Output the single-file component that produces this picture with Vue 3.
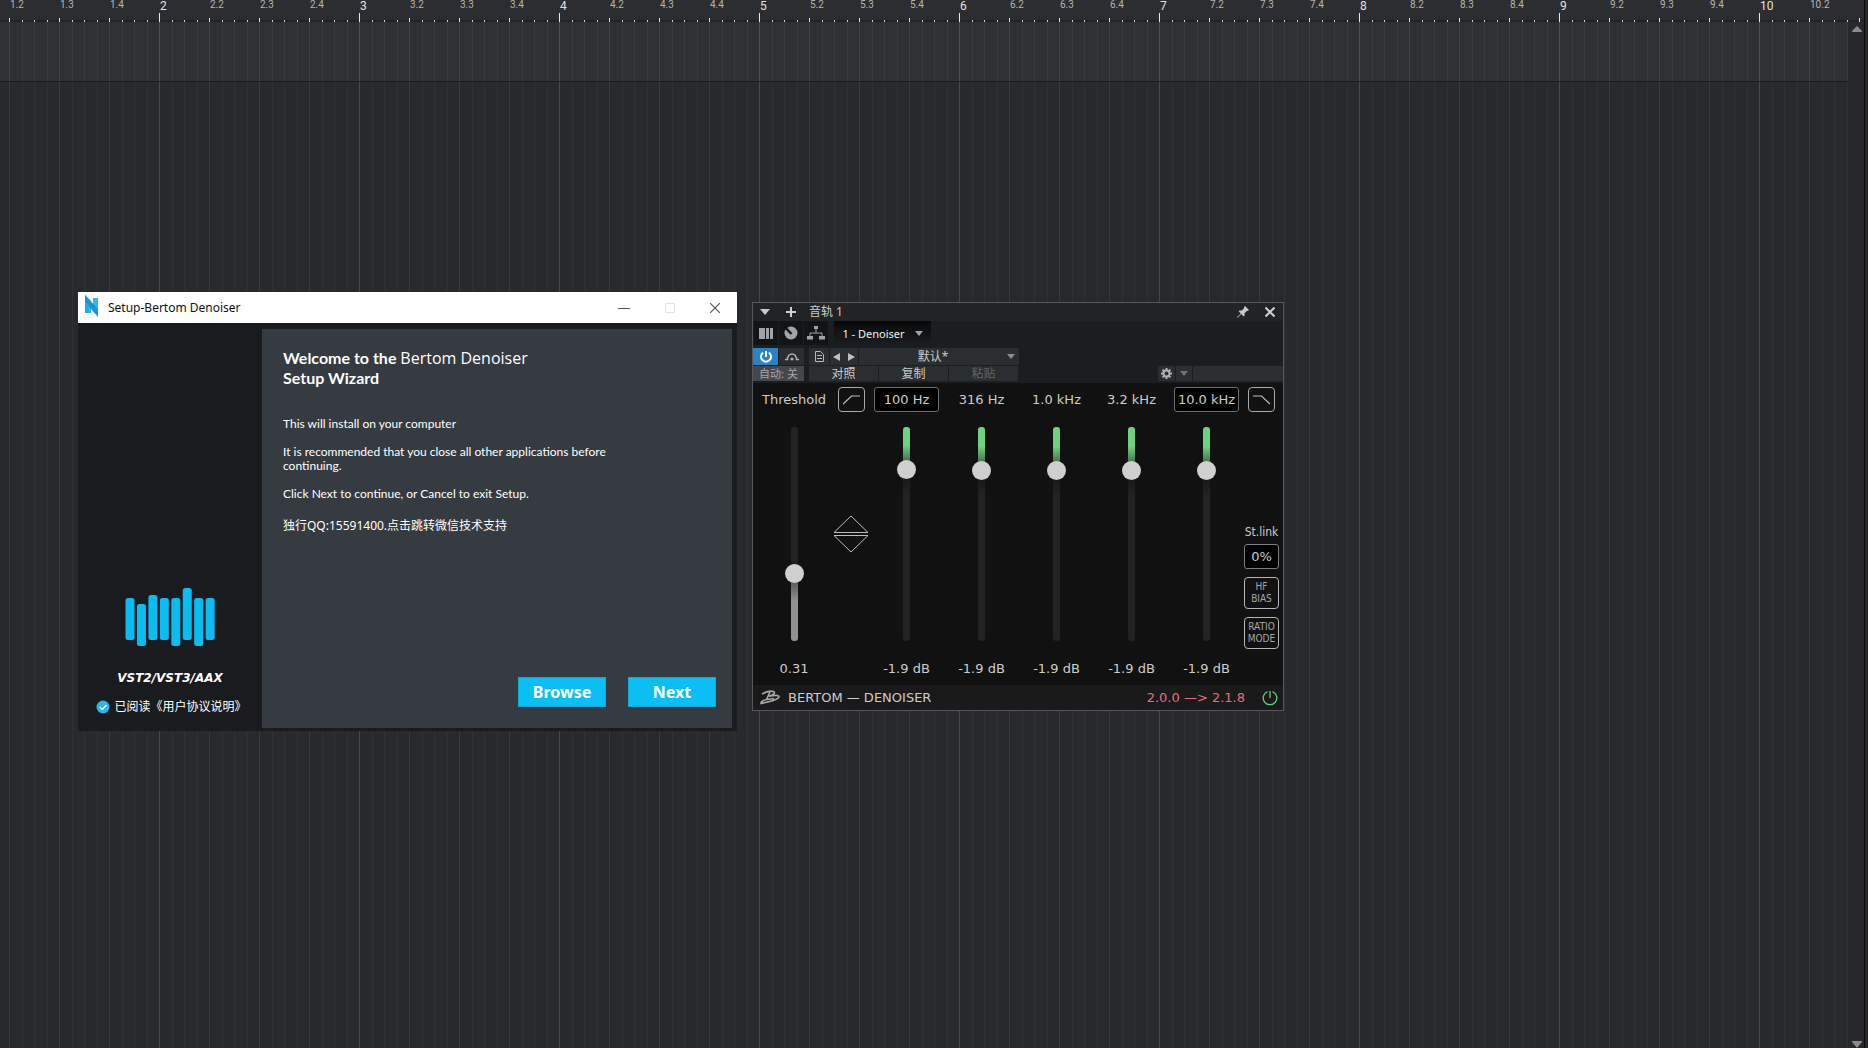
<script setup>
import { ref } from 'vue'

const rulerLabels = []
for (let bar = 1; bar <= 10; bar++) {
  for (let beat = 1; beat <= 4; beat++) {
    if (bar === 1 && beat === 1) continue
    if (bar === 10 && beat > 2) continue
    rulerLabels.push({ text: beat === 1 ? `${bar}` : `${bar}.${beat}`, major: beat === 1 })
  }
}

const logoBars = [
  { y: 11, h: 42 }, { y: 17, h: 42 }, { y: 8, h: 45 }, { y: 11, h: 42 },
  { y: 11, h: 48 }, { y: 1, h: 52 }, { y: 11, h: 48 }, { y: 11, h: 42 },
]

const agreed = ref(true)
const threshold = ref(29.7)
const bands = ref([
  { name: '100 Hz', boxed: true, value: 83.2, gain: '-1.9 dB' },
  { name: '316 Hz', boxed: false, value: 82.6, gain: '-1.9 dB' },
  { name: '1.0 kHz', boxed: false, value: 82.6, gain: '-1.9 dB' },
  { name: '3.2 kHz', boxed: false, value: 82.6, gain: '-1.9 dB' },
  { name: '10.0 kHz', boxed: true, value: 82.6, gain: '-1.9 dB' },
])
</script>

<template>
  <div class="daw">
    <div class="arrange">
      <header class="ruler">
        <span v-for="l in rulerLabels" :key="l.text" class="beat" :class="{ major: l.major }">{{ l.text }}</span>
      </header>
      <div class="body">
        <div class="lanes">
          <div class="track-row"></div>
          <div class="track-empty"></div>
        </div>
        <div class="scroll">
          <svg width="10" height="7" viewBox="0 0 10 7"><path d="M5 0 10 5v1H0V5z" fill="#8a8a8b" /></svg>
          <svg width="10" height="7" viewBox="0 0 10 7"><path d="M0 0h10v1L5 7 0 1z" fill="#8a8a8b" /></svg>
        </div>
      </div>
    </div>
    <div class="edge"></div>

    <section class="setup">
      <header class="setup-title">
        <svg class="n-logo" width="16" height="22" viewBox="0 0 16 22">
          <path d="M1 0 7 6v12H1z" fill="#36b6ea" />
          <path d="M9 3h5v13H9z" fill="#36b6ea" />
          <path d="M1 0 14 14v8L1 7z" fill="#1795d6" />
          <path d="M1 9 5 13v5H1z" fill="#2aa8e2" />
        </svg>
        <h1>Setup-Bertom Denoiser</h1>
        <button class="win-btn" aria-label="Minimize"><svg width="12" height="12" viewBox="0 0 12 12"><path d="M0 6.500h12" stroke="#555" /></svg></button>
        <button class="win-btn" aria-label="Maximize" disabled><svg width="10" height="10" viewBox="0 0 10 10"><path d="M.5.5h9v9h-9z" fill="none" stroke="#e4e4e6" /></svg></button>
        <button class="win-btn last" aria-label="Close"><svg width="10" height="10" viewBox="0 0 10 10"><path d="M0 0 10 10M10 0 0 10" stroke="#555" stroke-width="1.2" /></svg></button>
      </header>
      <div class="setup-body">
        <aside class="side">
          <svg class="bars" width="90" height="60" viewBox="0 0 90 60">
            <rect v-for="(b, i) in logoBars" :key="i" :x="i * 11.45 + 0.500" :y="b.y" width="9" :height="b.h" rx="2.500" fill="#0bbcf2" />
          </svg>
          <p class="formats">VST2/VST3/AAX</p>
          <label class="agree">
            <input v-model="agreed" type="checkbox" />
            <svg width="14" height="14" viewBox="0 0 14 14"><circle cx="7" cy="7" r="6.500" fill="#2cb5f0" /><path d="M3.800 7 6.300 9.400 10.500 5" fill="none" stroke="#fff" stroke-width="1.300" /></svg>
            <span>已阅读《用户协议说明》</span>
          </label>
        </aside>
        <main class="panel">
          <h2>Welcome to the <span>Bertom Denoiser</span><br />Setup Wizard</h2>
          <p>This will install on your computer</p>
          <p>It is recommended that you close all other applications before continuing.</p>
          <p>Click Next to continue, or Cancel to exit Setup.</p>
          <a href="#">独行QQ:15591400.点击跳转微信技术支持</a>
          <div class="actions">
            <button>Browse</button>
            <button>Next</button>
          </div>
        </main>
      </div>
    </section>

    <section class="plugin">
      <header class="plugin-title">
        <button class="ico" aria-label="Menu"><svg width="10" height="6" viewBox="0 0 10 6"><path d="M0 0h10L5 6z" fill="#c8c8c8" /></svg></button>
        <button class="ico" aria-label="Add"><svg width="10" height="10" viewBox="0 0 10 10"><path d="M5 0v10M0 5h10" stroke="#d0d0d0" stroke-width="2" /></svg></button>
        <span class="track-name">音轨 1</span>
        <button class="ico" aria-label="Pin"><svg width="12" height="12" viewBox="0 0 12 12"><path d="M8 0 12 4 10.800 5 10 4.800 7.600 7.200 7.600 9.500 6.600 10.400 4.300 8 .5 11.800 0 11.500.2 11 3.800 7.500 1.600 5.300 2.600 4.400 4.800 4.400 7.200 2 7 1.100z" fill="#c8c8c8" /></svg></button>
        <button class="ico" aria-label="Close"><svg width="10" height="10" viewBox="0 0 10 10"><path d="M.5.5 9.500 9.500M9.500.5.5 9.500" stroke="#d0d0d0" stroke-width="2" /></svg></button>
      </header>

      <div class="tools">
        <div class="tool-row first">
          <button class="view" aria-label="Channels"><svg width="14" height="11" viewBox="0 0 14 11"><path d="M0 0h6v11H0zM7 0h3v11H7zM11 0h3v11h-3z" fill="#a2a3a4" /></svg></button>
          <button class="view" aria-label="Macro knob"><svg width="14" height="14" viewBox="0 0 14 14"><circle cx="7" cy="7" r="6.500" fill="#a2a3a4" /><path d="M7.500 8 1 1.200" stroke="#131415" stroke-width="2.400" /></svg></button>
          <button class="view" aria-label="Routing"><svg width="18" height="14" viewBox="0 0 18 14"><path d="M9 3v4M3 10V7h12v3" fill="none" stroke="#a2a3a4" /><path d="M7 0h4v3H7zM0 10h6v3.500H0zM12 10h6v3.500h-6z" fill="#a2a3a4" /></svg></button>
          <button class="insert">1 - Denoiser <svg width="8" height="5" viewBox="0 0 8 5"><path d="M0 0h8L4 5z" fill="#a2a3a4" /></svg></button>
        </div>
        <div class="tool-row second">
          <button class="cell power" aria-label="Power"><svg width="12" height="12" viewBox="0 0 12 12"><path d="M3.200 1.500a5 5 0 1 0 5.600 0M6 0v6" fill="none" stroke="#fff" stroke-width="2" /></svg></button>
          <button class="cell arch" aria-label="Bypass"><svg width="14" height="9" viewBox="0 0 14 9"><path d="M0 7.500h2.500C2.500 0 11.500 0 11.500 7.500H14" fill="none" stroke="#b0b1b2" stroke-width="1.500" /><circle cx="7" cy="7" r="1.600" fill="#b0b1b2" /></svg></button>
          <button class="cell doc" aria-label="Preset file"><svg width="9" height="11" viewBox="0 0 9 11"><path d="M.5.5h5L8.500 3.500v7h-8zM2 4.500h5M2 7.500h5" fill="none" stroke="#b8b9ba" /></svg></button>
          <div class="cell steps">
            <button class="ico" aria-label="Previous preset"><svg width="7" height="8" viewBox="0 0 7 8"><path d="M7 0v8L0 4z" fill="#c0c0c0" /></svg></button>
            <button class="ico" aria-label="Next preset"><svg width="7" height="8" viewBox="0 0 7 8"><path d="M0 0v8L7 4z" fill="#c0c0c0" /></svg></button>
          </div>
          <button class="cell preset"><span>默认*</span><svg width="8" height="5" viewBox="0 0 8 5"><path d="M0 0h8L4 5z" fill="#8a8b8c" /></svg></button>
        </div>
        <div class="tool-row third">
          <button class="cell auto">自动: 关</button>
          <button class="cell cmd">对照</button>
          <button class="cell cmd">复制</button>
          <button class="cell cmd" disabled>粘贴</button>
          <span class="spacer"></span>
          <button class="cell gear" aria-label="Settings"><svg width="11" height="11" viewBox="0 0 11 11"><circle cx="5.500" cy="5.500" r="3" fill="none" stroke="#b0b1b2" stroke-width="2" /><path d="M5.500 0v2M5.500 9v2M0 5.500h2M9 5.500h2M1.600 1.600 3 3M8 8l1.400 1.400M9.400 1.600 8 3M3 8 1.600 9.400" stroke="#b0b1b2" stroke-width="2" /></svg></button>
          <button class="cell more" aria-label="More"><svg width="8" height="5" viewBox="0 0 8 5"><path d="M0 0h8L4 5z" fill="#707172" /></svg></button>
          <span class="cell blank"></span>
        </div>
      </div>

      <div class="denoiser">
        <div class="col threshold">
          <label class="name" for="threshold">Threshold</label>
          <input id="threshold" v-model="threshold" class="fader" type="range" min="0" max="100" step="0.1" :style="{ '--cut': 100 - threshold + '%' }" />
          <output for="threshold">0.31</output>
        </div>
        <div class="col linker">
          <button class="shape" aria-label="Low shelf"><svg width="17" height="10" viewBox="0 0 17 10"><path d="M0 9 8.500 1H17" fill="none" stroke="#c0c0c0" stroke-width="1.200" /></svg></button>
          <button class="nudge" aria-label="Move all bands"><svg width="36" height="38" viewBox="0 0 36 38"><path d="M1 17.500 18 1 35 17.500zM1 20.500 18 37 35 20.500z" fill="none" stroke="#bdbdbd" /></svg></button>
        </div>
        <div v-for="(b, i) in bands" :key="b.name" class="col band">
          <label class="name" :class="{ boxed: b.boxed }" :for="'band' + i">{{ b.name }}</label>
          <input :id="'band' + i" v-model="b.value" class="fader green" type="range" min="0" max="100" step="0.1" :style="{ '--cut': 100 - b.value + '%' }" />
          <output :for="'band' + i">{{ b.gain }}</output>
        </div>
        <div class="col options">
          <button class="shape" aria-label="High shelf"><svg width="17" height="10" viewBox="0 0 17 10"><path d="M0 1h8.500L17 9" fill="none" stroke="#c0c0c0" stroke-width="1.200" /></svg></button>
          <label class="st" for="stlink">St.link</label>
          <input id="stlink" class="pct" type="text" value="0%" />
          <button class="mode">HF<br />BIAS</button>
          <button class="mode">RATIO<br />MODE</button>
        </div>
      </div>

      <footer class="foot">
        <svg width="20" height="15" viewBox="0 0 20 15"><path d="M2 4C5 2 9 1 12 1.200C16 1.500 15 4.500 9 6.200M10 2 6.500 9.500M9 6.200C14 5 19 5 19 6.800C19 9.500 10 11.500 1 13.500C.5 11 4 9.500 14 8.500" fill="none" stroke="#a8a8a8" stroke-width="1.600" /></svg>
        <span class="brand">BERTOM — DENOISER</span>
        <a href="#">2.0.0 —&gt; 2.1.8</a>
        <button class="ico" aria-label="Enable"><svg width="16" height="16" viewBox="0 0 16 16"><path d="M5.500 1.600a6.800 6.800 0 1 0 5 0M8 1v7" fill="none" stroke="#62d07a" stroke-width="1.300" /></svg></button>
      </footer>
    </section>
  </div>
</template>

<style>
body { background: #28292b; }
</style>

<style scoped>
* { box-sizing: border-box; }
h1, h2, p { margin: 0; font-weight: 400; }
button { display: flex; align-items: center; justify-content: center; margin: 0; padding: 0; border: 0; background: none; color: inherit; font: inherit; }
svg { display: block; flex: none; }

.daw {
  position: relative;
  display: flex;
  height: 100vh;
  overflow: hidden;
  background: #28292b;
  font-family: "Noto Sans", "Noto Sans CJK SC", sans-serif;
}
.arrange { flex: 1; min-width: 0; display: flex; flex-direction: column; }
.edge { width: 4px; background: #27272a; border-left: 1px solid #0c0c0d; }

.ruler {
  display: flex;
  height: 22px;
  padding-left: 10px;
  overflow: hidden;
  font-family: Roboto, sans-serif;
  background:
    linear-gradient(90deg, #e4e4e4 1px, transparent 1px) 159px 100% / 200px 9px repeat-x,
    linear-gradient(90deg, #dcdcdc 1px, transparent 1px) 9px 100% / 50px 4px repeat-x,
    linear-gradient(90deg, transparent 13px, #d0d0d0 13px 14px, transparent 14px 25px, #d0d0d0 25px 26px, transparent 26px 38px, #d0d0d0 38px 39px, transparent 39px) 9px 100% / 50px 2px repeat-x,
    linear-gradient(#2c2d30 20px, #222326 20px);
}
.beat { flex: none; width: 50px; font-size: 10px; line-height: 10px; color: #b4b4b4; }
.beat.major { font-size: 12px; line-height: 12px; color: #e2e2e2; }

.body { flex: 1; display: flex; min-height: 0; }
.lanes { flex: 1; display: flex; flex-direction: column; }
.track-row, .track-empty {
  background:
    linear-gradient(90deg, var(--bar) 1px, transparent 1px) 159px 0 / 200px 100% repeat-x,
    linear-gradient(90deg, var(--beat) 1px, transparent 1px 13px, var(--sub) 13px 14px, transparent 14px 25px, var(--sub) 25px 26px, transparent 26px 38px, var(--sub) 38px 39px, transparent 39px) 9px 0 / 50px 100% repeat-x,
    var(--fill);
}
.track-row { --bar: #505153; --beat: #404143; --sub: #383a3b; --fill: #2f3032; height: 60px; border-bottom: 1px solid #1b1c1d; }
.track-empty { --bar: #464749; --beat: #38393b; --sub: #303133; --fill: #28292b; flex: 1; }
.scroll { width: 16px; padding: 4px 0 0 4px; display: flex; flex-direction: column; justify-content: space-between; background: #27282b; }

.setup { position: absolute; left: 78px; top: 292px; width: 659px; background: #191b1f; color: #fff; }
.setup-title { display: flex; height: 31px; align-items: center; padding-left: 6px; background: #fff; color: #111; }
.setup-title h1 { flex: 1; margin-left: 8px; font-size: 12px; line-height: 16px; }
.n-logo { margin-bottom: 4px; }
.win-btn { width: 46px; height: 30px; }
.win-btn.last { width: 44px; }
.setup-body { display: flex; height: 408px; padding: 6px 5px 3px 0; }
.side { width: 184px; display: flex; flex-direction: column; align-items: center; justify-content: flex-end; padding-bottom: 12px; }
.formats { margin-top: 23px; font: italic 700 12px/16px "DejaVu Sans", sans-serif; }
.agree { display: flex; align-items: center; gap: 4px; margin: 12px 0 0 3px; font-size: 12px; line-height: 18px; white-space: nowrap; }
.agree input { position: absolute; opacity: 0; margin: 0; }
.panel { flex: 1; position: relative; display: flex; flex-direction: column; padding: 19px 16px 21px 21px; background: #363a41; font: 700 12px/14px Lato, "Noto Sans CJK SC", sans-serif; }
.panel h2 { margin-bottom: 29px; font-size: 16px; line-height: 20px; font-weight: 700; }
.panel h2 span { font-family: "Open Sans", sans-serif; font-weight: 400; }
.panel p { width: 345px; margin-bottom: 14px; }
.panel a { margin-top: 2px; font-family: "Noto Sans", "Noto Sans CJK SC", sans-serif; font-weight: 400; line-height: 18px; color: #fff; text-decoration: none; }
.actions { display: flex; justify-content: flex-end; gap: 22px; margin-top: auto; }
.actions button { width: 88px; height: 30px; border: 1px solid #14a8d8; background: #0bbff4; color: #fff; font: 700 16px/20px "Noto Sans", sans-serif; }

.plugin { position: absolute; left: 752px; top: 302px; width: 532px; border: 1px solid #55575c; background: #111; color: #ccc; font-size: 12px; }
.plugin-title { display: flex; align-items: center; height: 18px; padding: 0 8px 0 7px; background: #222325; }
.plugin-title .ico:nth-child(2) { margin-left: 16px; }
.track-name { flex: 1; margin-left: 13px; line-height: 18px; }
.plugin-title .ico:last-child { margin-left: 16px; }
.tools { display: flex; flex-direction: column; gap: 1px; height: 62px; background: #1b1e21; }
.tool-row { display: flex; gap: 1px; }
.first { height: 26px; padding-left: 1px; }
.view { width: 24px; height: 24px; background: #131415; }
.insert { gap: 10px; width: 97px; height: 24px; margin-left: 5px; background: linear-gradient(#080809, #1b1e21); color: #f0f0f0; font-size: 11px; white-space: nowrap; }
.second { height: 17px; }
.third { height: 15px; }
.cell { background: #2b2e31; line-height: 15px; }
.power { width: 25px; background: #2a83c6; }
.arch { width: 25px; }
.doc { width: 20px; margin-left: 4px; }
.steps { display: flex; align-items: center; justify-content: center; gap: 8px; width: 28px; }
.preset { width: 160px; padding-right: 4px; }
.preset span { flex: 1; }
.auto { width: 51px; margin-right: 4px; background: #45484b; color: #a5a6a7; font-size: 11px; }
.cmd { width: 69px; }
.cmd:disabled { color: #636567; }
.spacer { flex: 1; }
.gear { width: 17px; }
.more { width: 16px; }
.blank { width: 90px; }

.denoiser { display: flex; height: 302px; padding-top: 4px; font: 12px/14px "DejaVu Sans", sans-serif; }
.col { display: flex; flex-direction: column; align-items: center; }
.threshold { width: 82px; }
.linker { width: 32px; margin-right: 2px; }
.band { width: 75px; }
.options { flex: 1; padding-right: 4px; }
.name { height: 25px; display: flex; align-items: center; justify-content: center; border: 1px solid transparent; font-size: 13px; }
.name.boxed { width: 65px; border-color: #6d6d6d; border-radius: 3px; background: #000; }
.shape { width: 27px; height: 25px; border: 1px solid #a8a8a8; border-radius: 4px; }
.nudge { margin-top: 103px; }
output { margin-top: 20px; font-size: 13px; line-height: 16px; }
.fader {
  appearance: none;
  writing-mode: vertical-lr;
  direction: rtl;
  width: 19px;
  height: 214px;
  margin: 15px 0 0;
  background: none;
  --above: #232323 0 calc(var(--cut) - 20px), #111 var(--cut);
  --below: #4c4c4c var(--cut), #929292 calc(var(--cut) + 24px) 100%;
}
.fader.green {
  --above: #6fd282 0 calc(var(--cut) - 18px), #38593f calc(var(--cut) + 2px);
  --below: #111 calc(var(--cut) + 4px), #232323 calc(var(--cut) + 32px) 100%;
}
.fader::-webkit-slider-runnable-track { width: 7px; height: 214px; border-radius: 3px; background: linear-gradient(180deg, var(--above), var(--below)); }
.fader::-webkit-slider-thumb { appearance: none; width: 19px; height: 19px; margin-left: -6px; border-radius: 50%; background: #cfcfcf; }

.st { margin-top: 112px; font: 12px/16px "DejaVu Sans Condensed", "DejaVu Sans", sans-serif; }
.pct { width: 35px; height: 25px; margin-top: 4px; padding: 0; border: 1px solid #7d7d7d; border-radius: 3px; background: #000; color: #ccc; text-align: center; font: 13px "DejaVu Sans", sans-serif; }
.mode { width: 35px; height: 32px; margin-top: 8px; border: 1px solid #b5b5b5; border-radius: 4px; font: 10px/12px "DejaVu Sans Condensed", "DejaVu Sans", sans-serif; color: #a8a8a8; }

.foot { display: flex; align-items: center; height: 25px; padding: 0 5px 0 7px; background: #1a1a1a; font: 13px/16px "DejaVu Sans", sans-serif; }
.brand { flex: 1; margin-left: 8px; }
.foot a { color: #e2707f; text-decoration: none; }
.foot .ico { margin-left: 17px; }
</style>
